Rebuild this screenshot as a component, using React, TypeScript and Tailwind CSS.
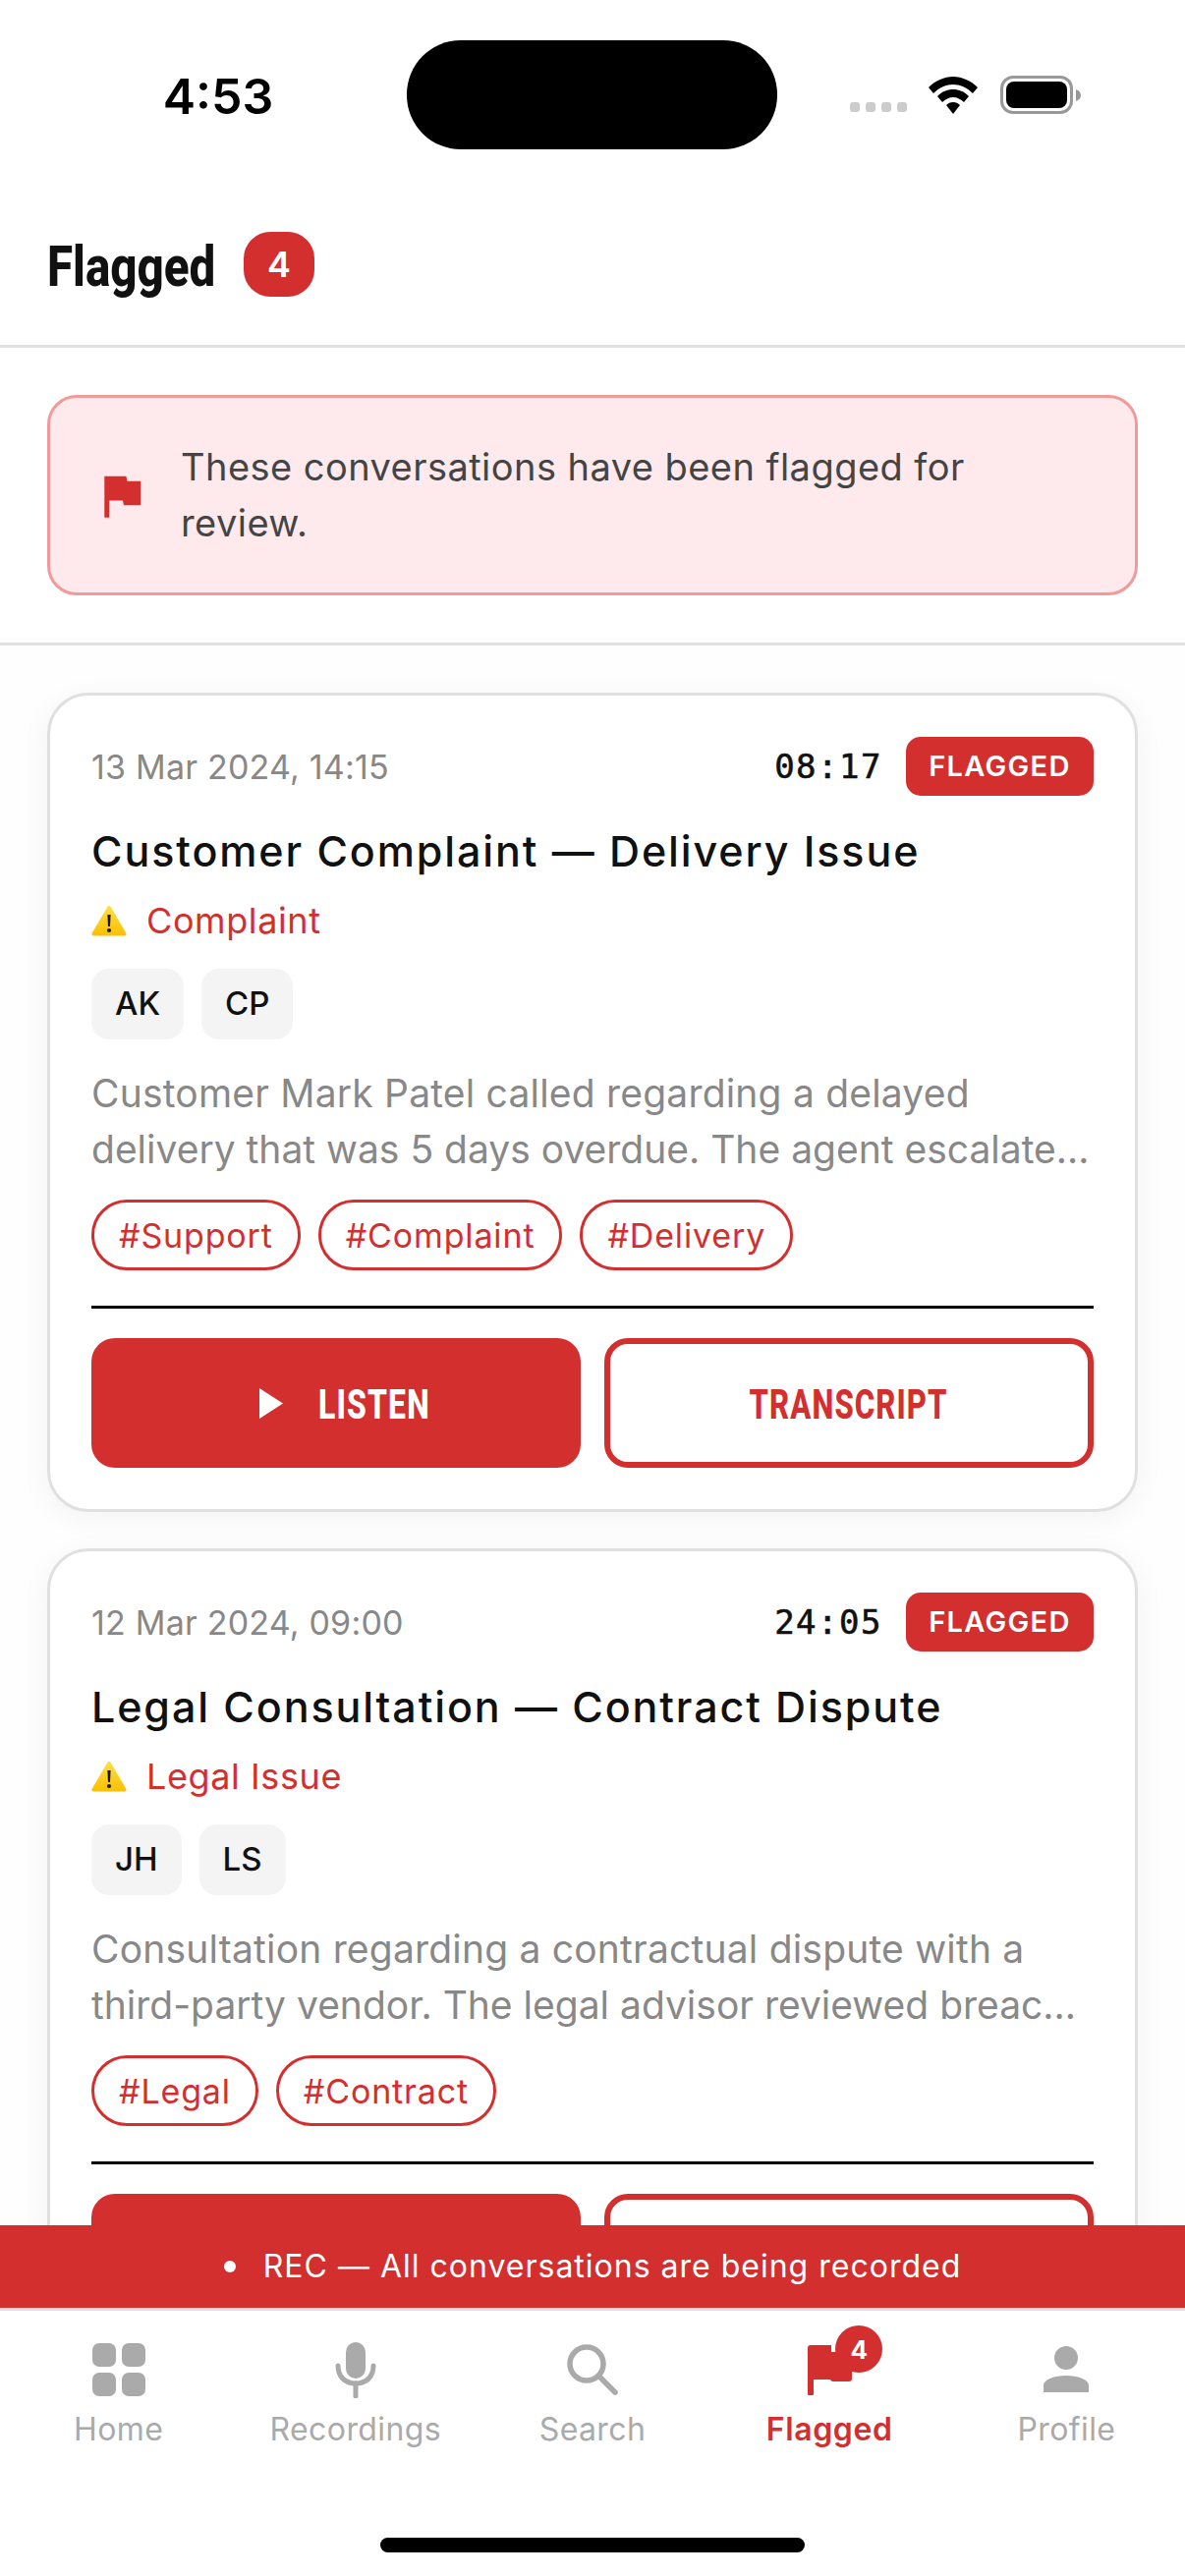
import React from "react";

const FLAG = "M14.4 6L14 4H5v17h2v-7h5.6l.4 2h7V6z";

function Warn() {
  return (
    <svg width="36" height="32" viewBox="0 0 36 32" className="shrink-0">
      <defs>
        <linearGradient id="wg" x1="0" y1="0" x2="0" y2="1">
          <stop offset="0" stopColor="#fde047" />
          <stop offset="1" stopColor="#fbbf04" />
        </linearGradient>
      </defs>
      <path d="M18 1 C18.8 1 19.4 1.5 20 2.5 L35.2 28.5 C36 30 35.4 31.5 33.6 31.5 L2.4 31.5 C.6 31.5 0 30 .8 28.5 L16 2.5 C16.6 1.5 17.2 1 18 1 Z" fill="url(#wg)" />
      <path d="M16.4 10h3.2l-.6 12h-2z" fill="#1a1a1a" />
      <circle cx="18" cy="26" r="2.1" fill="#1a1a1a" />
    </svg>
  );
}

function Card({ date, time, title, kind, people, l1, l2, tags }: { date: string; time: string; title: string; kind: string; people: string[]; l1: string; l2: string; tags: string[] }) {
  return (
    <div className="shrink-0 bg-white border-[3px] border-[#e0e0e0] rounded-[42px] p-[42px] shadow-[0_6px_30px_rgba(0,0,0,0.05)]">
      <div className="flex items-center justify-between h-[60px]">
        <span className="text-[34px] text-[#888888] tracking-[0.2px]">{date}</span>
        <div className="flex items-center gap-[24px]">
          <span className="font-['DejaVu_Sans_Mono',monospace] text-[34px] text-[#111111] tracking-[1.5px] [-webkit-text-stroke:0.6px_#111111]">{time}</span>
          <span className="flex items-center justify-center h-[60px] w-[191px] bg-[#d32f2f] rounded-[15px] text-white text-[29px] font-semibold tracking-[1.3px]">FLAGGED</span>
        </div>
      </div>
      <div className="mt-[26px] h-[60px] flex items-center text-[43px] font-[550] text-[#111111] whitespace-nowrap tracking-[1.9px]">{title}</div>
      <div className="mt-[23px] h-[36px] flex items-center gap-[20px]">
        <Warn />
        <span className="text-[36px] text-[#d32f2f] tracking-[0.6px]">{kind}</span>
      </div>
      <div className="mt-[31px] flex gap-[18px]">
        {people.map((p) => (
          <span key={p} className="flex items-center justify-center h-[72px] px-[24px] bg-[#f4f4f4] rounded-[18px] text-[33px] font-medium text-[#111111]">{p}</span>
        ))}
      </div>
      <div className="mt-[26px] text-[39px] leading-[57px] text-[#888888] tracking-[0.2px]">
        <div className="whitespace-nowrap overflow-hidden">{l1}</div>
        <div className="truncate tracking-[0px]">{l2}</div>
      </div>
      <div className="mt-[23px] flex gap-[18px]">
        {tags.map((t) => (
          <span key={t} className="flex items-center justify-center h-[72px] px-[25px] border-[3px] border-[#d32f2f] rounded-[36px] text-[34px] text-[#d32f2f] tracking-[0.85px]">{t}</span>
        ))}
      </div>
      <div className="mt-[36px] h-[3px] bg-black" />
      <div className="mt-[30px] flex justify-between">
        <div className="w-[498px] h-[132px] bg-[#d32f2f] rounded-[24px] flex items-center justify-center pl-[17px] gap-[37px]">
          <svg width="24" height="31" viewBox="0 0 24 31" className="shrink-0"><path d="M0 0 L24 15.5 L0 31 Z" fill="#fff" /></svg>
          <div className="w-[112px] flex justify-center mt-[3px]">
            <span className="inline-block whitespace-nowrap scale-x-[0.76] font-['Roboto',sans-serif] font-extrabold text-[42px] tracking-[1.5px] text-white">LISTEN</span>
          </div>
        </div>
        <div className="w-[498px] h-[132px] bg-white border-[6px] border-[#d32f2f] rounded-[24px] flex items-center justify-center">
          <div className="w-[199px] flex justify-center mt-[3px]">
            <span className="inline-block whitespace-nowrap scale-x-[0.74] font-['Roboto',sans-serif] font-extrabold text-[42px] tracking-[1.5px] text-[#d32f2f]">TRANSCRIPT</span>
          </div>
        </div>
      </div>
    </div>
  );
}

function NavItem({ label, active, children }: { label: string; active?: boolean; children: React.ReactNode }) {
  return (
    <div className="flex-1 flex flex-col items-center">
      <div className="relative h-[60px] w-[72px] flex items-center justify-center">{children}</div>
      <span className={active ? "mt-[7px] text-[32px] font-semibold text-[#d32f2f] tracking-[0.6px]" : "mt-[7px] text-[32px] text-[#aaaaaa] tracking-[0.4px]"}>{label}</span>
    </div>
  );
}

export default function App() {
  return (
    <div className="w-[1206px] h-[2622px] flex flex-col bg-white overflow-hidden font-['Inter',sans-serif]">
      <div className="h-[186px] shrink-0 flex items-start pt-[41px]">
        <div className="w-[414px] h-[111px] flex items-center justify-center pl-[30px] pt-[3px] text-[50px] font-semibold text-black">4:53</div>
        <div className="w-[377px] h-[111px] bg-black rounded-[55px]" />
        <div className="flex-1 h-[111px] flex items-center pl-[74px]">
          <div className="flex gap-[6px] mt-[25px]">
            <span className="w-[10px] h-[10px] rounded-[3px] bg-[#cccccc]" />
            <span className="w-[10px] h-[10px] rounded-[3px] bg-[#cccccc]" />
            <span className="w-[10px] h-[10px] rounded-[3px] bg-[#cccccc]" />
            <span className="w-[10px] h-[10px] rounded-[3px] bg-[#cccccc]" />
          </div>
          <svg width="50" height="38" viewBox="0 0 50 38" className="ml-[22px]">
            <path d="M25 0 C34 0 43 4 50 11 L45 17 C39 11 32 8 25 8 C18 8 11 11 5 17 L0 11 C7 4 16 0 25 0 Z" fill="#000" />
            <path d="M25 13 C31 13 36 15 41 20 L36 26 C33 23 29 21 25 21 C21 21 17 23 14 26 L9 20 C14 15 19 13 25 13 Z" fill="#000" />
            <path d="M25 26 C28 26 30 27 32 29 L25 38 L18 29 C20 27 22 26 25 26 Z" fill="#000" />
          </svg>
          <div className="ml-[23px] w-[74px] h-[39px] border-[3px] border-[#999999] rounded-[13px] p-[3px]">
            <div className="w-full h-full bg-black rounded-[8px]" />
          </div>
          <svg width="5" height="12" viewBox="0 0 5 12" className="ml-[3px]"><path d="M0 0 C3 1 5 3 5 6 C5 9 3 11 0 12 Z" fill="#999" /></svg>
        </div>
      </div>

      <div className="h-[168px] shrink-0 border-b-[3px] border-[#e0e0e0] flex items-center pl-[48px] gap-[31px]">
        <div className="w-[169px] mt-[5px]">
          <span className="inline-block whitespace-nowrap origin-left scale-x-[0.82] font-['Roboto',sans-serif] font-extrabold text-[58px] text-[#111111]">Flagged</span>
        </div>
        <span className="w-[72px] h-[66px] rounded-[27px] bg-[#d32f2f] flex items-center justify-center text-white text-[36px] font-semibold">4</span>
      </div>

      <div className="shrink-0 border-b-[3px] border-[#e0e0e0] px-[48px] py-[48px]">
        <div className="h-[204px] bg-[#feeaec] border-[3px] border-[#f19a9a] rounded-[30px] flex items-center pl-[43px] pr-[100px] gap-[31px]">
          <svg width="59" height="59" viewBox="0 0 24 24" className="shrink-0"><path d={FLAG} fill="#d32f2f" /></svg>
          <div className="text-[38px] leading-[57px] text-[#444444] tracking-[0.45px]">These conversations have been flagged for review.</div>
        </div>
      </div>

      <div className="flex-1 min-h-0 overflow-hidden p-[48px] flex flex-col gap-[37px] bg-[#fefefe]">
        <Card
          date="13 Mar 2024, 14:15"
          time="08:17"
          title="Customer Complaint — Delivery Issue"
          kind="Complaint"
          people={["AK", "CP"]}
          l1="Customer Mark Patel called regarding a delayed"
          l2="delivery that was 5 days overdue. The agent escalated the issue to the logistics team."
          tags={["#Support", "#Complaint", "#Delivery"]}
        />
        <Card
          date="12 Mar 2024, 09:00"
          time="24:05"
          title="Legal Consultation — Contract Dispute"
          kind="Legal Issue"
          people={["JH", "LS"]}
          l1="Consultation regarding a contractual dispute with a"
          l2="third-party vendor. The legal advisor reviewed breach of contract terms."
          tags={["#Legal", "#Contract"]}
        />
      </div>

      <div className="h-[84px] shrink-0 bg-[#d32f2f] flex items-center justify-center gap-[28px] text-white text-[32px] tracking-[1px]">
        <span className="w-[12px] h-[12px] rounded-full bg-white" />
        <span>REC — All conversations are being recorded</span>
      </div>

      <div className="h-[273px] shrink-0 border-t-[3px] border-[#e0e0e0] bg-white flex flex-col pt-[30px]">
        <div className="flex">
          <NavItem label="Home">
            <svg width="54" height="54" viewBox="0 0 54 54">
              <rect x="0" y="0" width="24" height="24" rx="7" fill="#aaa" />
              <rect x="30" y="0" width="24" height="24" rx="7" fill="#aaa" />
              <rect x="0" y="30" width="24" height="24" rx="7" fill="#aaa" />
              <rect x="30" y="30" width="24" height="24" rx="7" fill="#aaa" />
            </svg>
          </NavItem>
          <NavItem label="Recordings">
            <svg width="42" height="57" viewBox="0 0 42 57">
              <rect x="11" y="0" width="20" height="37" rx="10" fill="#aaa" />
              <path d="M3 24 C3 35 10 42 21 42 C32 42 39 35 39 24" fill="none" stroke="#aaa" strokeWidth="5" strokeLinecap="round" />
              <path d="M21 42 V55" stroke="#aaa" strokeWidth="5" strokeLinecap="round" />
            </svg>
          </NavItem>
          <NavItem label="Search">
            <svg width="52" height="52" viewBox="0 0 52 52">
              <circle cx="20" cy="20" r="17" fill="none" stroke="#aaa" strokeWidth="5.5" />
              <path d="M33 33 L49 49" stroke="#aaa" strokeWidth="5.5" strokeLinecap="round" />
            </svg>
          </NavItem>
          <NavItem label="Flagged" active>
            <svg width="46" height="52" viewBox="0 0 46 52" className="ml-[2px]">
              <path d="M3 1 H24 V36 H6 V50 A3 3 0 0 1 0 50 V4 A3 3 0 0 1 3 1 Z M24 8 H42 A3 3 0 0 1 45 11 V35 A3 3 0 0 1 42 38 H26 A3 3 0 0 1 23 35 Z" fill="#d32f2f" />
            </svg>
            <span className="absolute -top-[15px] left-[42px] w-[48px] h-[48px] rounded-full bg-[#d32f2f] flex items-center justify-center text-white text-[26px] font-bold">4</span>
          </NavItem>
          <NavItem label="Profile">
            <svg width="48" height="48" viewBox="0 0 48 48">
              <circle cx="24" cy="12" r="12" fill="#aaa" />
              <path d="M1 47 V40 C1 34 12 30 24 30 C36 30 47 34 47 40 V47 Z" fill="#aaa" />
            </svg>
          </NavItem>
        </div>
        <div className="mt-auto mb-[24px] mx-auto w-[432px] h-[15px] rounded-full bg-black" />
      </div>
    </div>
  );
}
